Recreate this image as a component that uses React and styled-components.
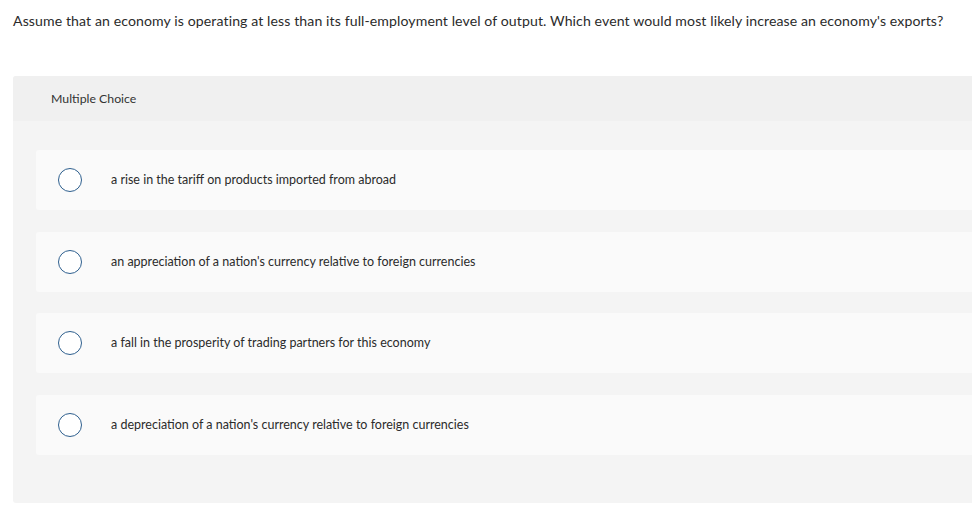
import React from 'react';
import styled, { createGlobalStyle } from 'styled-components';

const GlobalStyle = createGlobalStyle`
  html, body {
    margin: 0;
    padding: 0;
    background: #ffffff;
    overflow: hidden;
  }
  body {
    font-family: Lato, "Liberation Sans", sans-serif;
    color: #2b2b2b;
  }
`;

const Page = styled.div`
  width: 972px;
  height: 528px;
  padding: 12px 0 0 13px;
  box-sizing: border-box;
`;

const Question = styled.p`
  margin: 0;
  font-size: 14.1px;
  line-height: 18px;
  color: #2b2b2b;
  letter-spacing: 0.1px;
`;

const Panel = styled.div`
  margin-top: 46px;
  width: 980px;
  background: #f4f4f4;
  border-radius: 3px;
  overflow: hidden;
`;

const PanelHeader = styled.div`
  height: 45px;
  display: flex;
  align-items: center;
  padding-left: 38px;
  background: #f0f0f0;
  font-size: 12.3px;
  color: #333;
`;

const Options = styled.div`
  display: flex;
  flex-direction: column;
  gap: 21.6px;
  padding: 29px 0 48px 23px;
`;

const Option = styled.label`
  height: 60px;
  display: flex;
  align-items: center;
  background: #fafafa;
  border-radius: 3px;
  padding-left: 22px;
  cursor: pointer;
`;

const Radio = styled.span`
  width: 22px;
  height: 22px;
  border: 1.5px solid #2e5f8e;
  border-radius: 50%;
  background: #fff;
  flex: none;
`;

const OptionText = styled.span`
  margin-left: 29px;
  margin-top: -1px;
  font-size: 12.5px;
  color: #2b2b2b;
`;

const choices = [
  'a rise in the tariff on products imported from abroad',
  "an appreciation of a nation's currency relative to foreign currencies",
  'a fall in the prosperity of trading partners for this economy',
  "a depreciation of a nation's currency relative to foreign currencies",
];

export default function App() {
  return (
    <>
      <GlobalStyle />
      <Page>
        <Question>
          Assume that an economy is operating at less than its full-employment level of output. Which event would most likely increase an economy's exports?
        </Question>
        <Panel>
          <PanelHeader>Multiple Choice</PanelHeader>
          <Options>
            {choices.map((c) => (
              <Option key={c}>
                <Radio />
                <OptionText>{c}</OptionText>
              </Option>
            ))}
          </Options>
        </Panel>
      </Page>
    </>
  );
}
